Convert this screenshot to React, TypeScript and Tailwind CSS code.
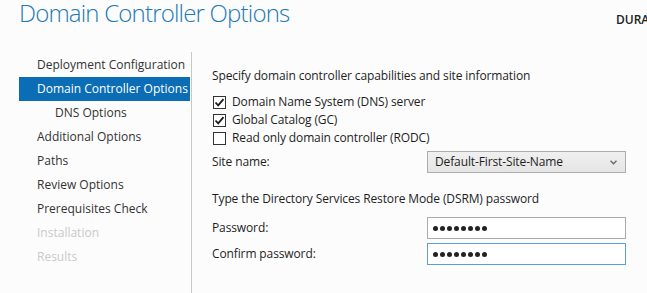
import React from "react";

const font = { fontFamily: '"Segoe UI", "Open Sans", "Noto Sans", sans-serif' };

const steps = [
  { label: "Deployment Configuration", state: "done" },
  { label: "Domain Controller Options", state: "active" },
  { label: "DNS Options", state: "done", sub: true },
  { label: "Additional Options", state: "done" },
  { label: "Paths", state: "done" },
  { label: "Review Options", state: "done" },
  { label: "Prerequisites Check", state: "done" },
  { label: "Installation", state: "disabled" },
  { label: "Results", state: "disabled" },
];

function Checkbox({ checked, label }: { checked: boolean; label: string }) {
  return (
    <div className="flex items-center h-[18px]">
      <div className="w-[13px] h-[13px] border border-[#333] bg-white flex items-center justify-center ml-[1px]">
        {checked && (
          <svg width="11" height="11" viewBox="0 0 11 11">
            <path d="M1.5 5.5 L4.2 8.3 L9.5 2.2" fill="none" stroke="#1a1a1a" strokeWidth="1.8" />
          </svg>
        )}
      </div>
      <span className="ml-[6px]">{label}</span>
    </div>
  );
}

function PasswordBox({ focused }: { focused?: boolean }) {
  return (
    <div
      className={
        "w-[199px] h-[22px] bg-white border flex items-center gap-[2px] pl-[5px] " +
        (focused ? "border-[#5a9ee0]" : "border-[#ababab]")
      }
    >
      {Array.from({ length: 8 }).map((_, i) => (
        <span key={i} className="w-[5px] h-[5px] rounded-full bg-[#222]" />
      ))}
    </div>
  );
}

export default function App() {
  return (
    <div
      className="w-[647px] h-[293px] overflow-hidden bg-[#fcfcfc] text-[12px] text-[#1e1e1e] flex flex-col"
      style={font}
    >
      <div className="h-[52px] flex justify-between shrink-0">
        <h1 className="pl-[19px] pt-[2px] text-[24px] leading-[22px] tracking-[-0.8px] font-light text-[#1b7ab3]">
          Domain Controller Options
        </h1>
        <div className="w-[31px] pt-[11px] font-semibold whitespace-nowrap overflow-hidden text-[#222]">
          DURANGO
        </div>
      </div>
      <div className="flex flex-1">
        <div className="w-[192px] pl-[19px] pt-[1px] border-r border-[#c8c8c8] shrink-0">
          {steps.map((s) => (
            <div
              key={s.label}
              className={
                "h-[24px] flex items-center mr-[1px] whitespace-nowrap " +
                (s.sub ? "pl-[36px] " : "pl-[18px] ") +
                (s.state === "active"
                  ? "bg-[#0a6db5] text-white"
                  : s.state === "disabled"
                  ? "text-[#c9c9c9]"
                  : "text-[#333]")
              }
            >
              {s.label}
            </div>
          ))}
        </div>
        <div className="pl-[20px] pt-[16px] flex flex-col tracking-[-0.12px]">
          <div className="h-[16px] leading-[16px]">
            Specify domain controller capabilities and site information
          </div>
          <div className="mt-[9px] flex flex-col">
            <Checkbox checked label="Domain Name System (DNS) server" />
            <Checkbox checked label="Global Catalog (GC)" />
            <Checkbox checked={false} label="Read only domain controller (RODC)" />
          </div>
          <div className="flex items-center mt-[4px]">
            <span className="w-[215px]">Site name:</span>
            <div className="w-[199px] h-[22px] border border-[#acacac] bg-gradient-to-b from-[#f0f0f0] to-[#e5e5e5] flex items-center justify-between pl-[7px] pr-[8px]">
              <span>Default-First-Site-Name</span>
              <svg width="7" height="5" viewBox="0 0 7 5">
                <path d="M0.5 0.8 L3.5 3.8 L6.5 0.8" fill="none" stroke="#666" strokeWidth="1.3" />
              </svg>
            </div>
          </div>
          <div className="mt-[18px] h-[16px] leading-[16px]">
            Type the Directory Services Restore Mode (DSRM) password
          </div>
          <div className="flex items-center mt-[10px]">
            <span className="w-[215px]">Password:</span>
            <PasswordBox />
          </div>
          <div className="flex items-center mt-[4px]">
            <span className="w-[215px]">Confirm password:</span>
            <PasswordBox focused />
          </div>
        </div>
      </div>
    </div>
  );
}
